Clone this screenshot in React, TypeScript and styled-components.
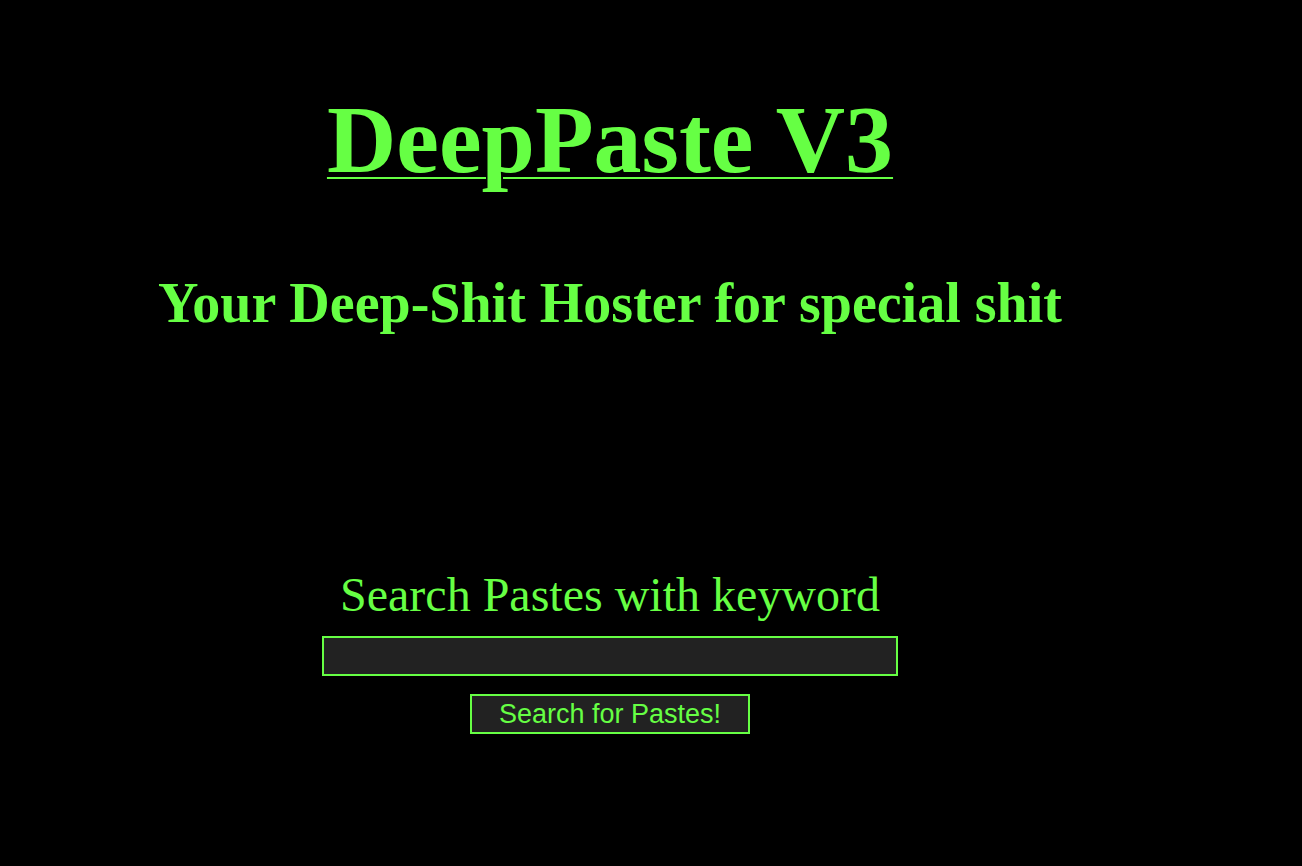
import styled, { createGlobalStyle } from "styled-components";

const GlobalStyle = createGlobalStyle`
  html, body {
    margin: 0;
    padding: 0;
    background: #000;
  }
  body {
    font-family: "Liberation Serif", "Times New Roman", serif;
    color: #66ff44;
  }
`;

export default function App() {
  return (
    <>
      <GlobalStyle />
      <Page>
        <Title href="#">DeepPaste V3</Title>
        <Subtitle>Your Deep-Shit Hoster for special shit</Subtitle>
        <SearchForm onSubmit={(e) => e.preventDefault()}>
          <Label htmlFor="keyword">Search Pastes with keyword</Label>
          <SearchInput id="keyword" type="text" />
          <SearchButton type="submit">Search for Pastes!</SearchButton>
        </SearchForm>
      </Page>
    </>
  );
}

const Page = styled("main")`
  width: 1220px;
  min-height: 866px;
  display: flex;
  flex-direction: column;
  align-items: center;
  text-align: center;
`;

const Title = styled("a")`
  display: block;
  margin-top: 92px;
  font-size: 96px;
  line-height: 96px;
  font-weight: bold;
  color: #66ff44;
  text-decoration: underline;
  text-decoration-thickness: 2px;
  text-underline-offset: 5px;
`;

const Subtitle = styled("h2")`
  margin: 87px 0 0;
  font-size: 56px;
  line-height: 56px;
  font-weight: bold;
`;

const SearchForm = styled("form")`
  margin-top: 240px;
  display: flex;
  flex-direction: column;
  align-items: center;
`;

const Label = styled("label")`
  font-size: 48px;
  line-height: 48px;
`;

const SearchInput = styled("input")`
  box-sizing: border-box;
  margin-top: 17px;
  width: 576px;
  height: 40px;
  background: #222;
  border: 2px solid #66ff44;
  color: #66ff44;
  font-size: 20px;
  outline: none;
`;

const SearchButton = styled("button")`
  box-sizing: border-box;
  margin-top: 18px;
  width: 280px;
  height: 40px;
  padding: 0;
  background: #222;
  border: 2px solid #66ff44;
  color: #66ff44;
  font-family: "Liberation Sans", Arial, sans-serif;
  font-size: 27px;
  line-height: 1;
  cursor: pointer;
`;
